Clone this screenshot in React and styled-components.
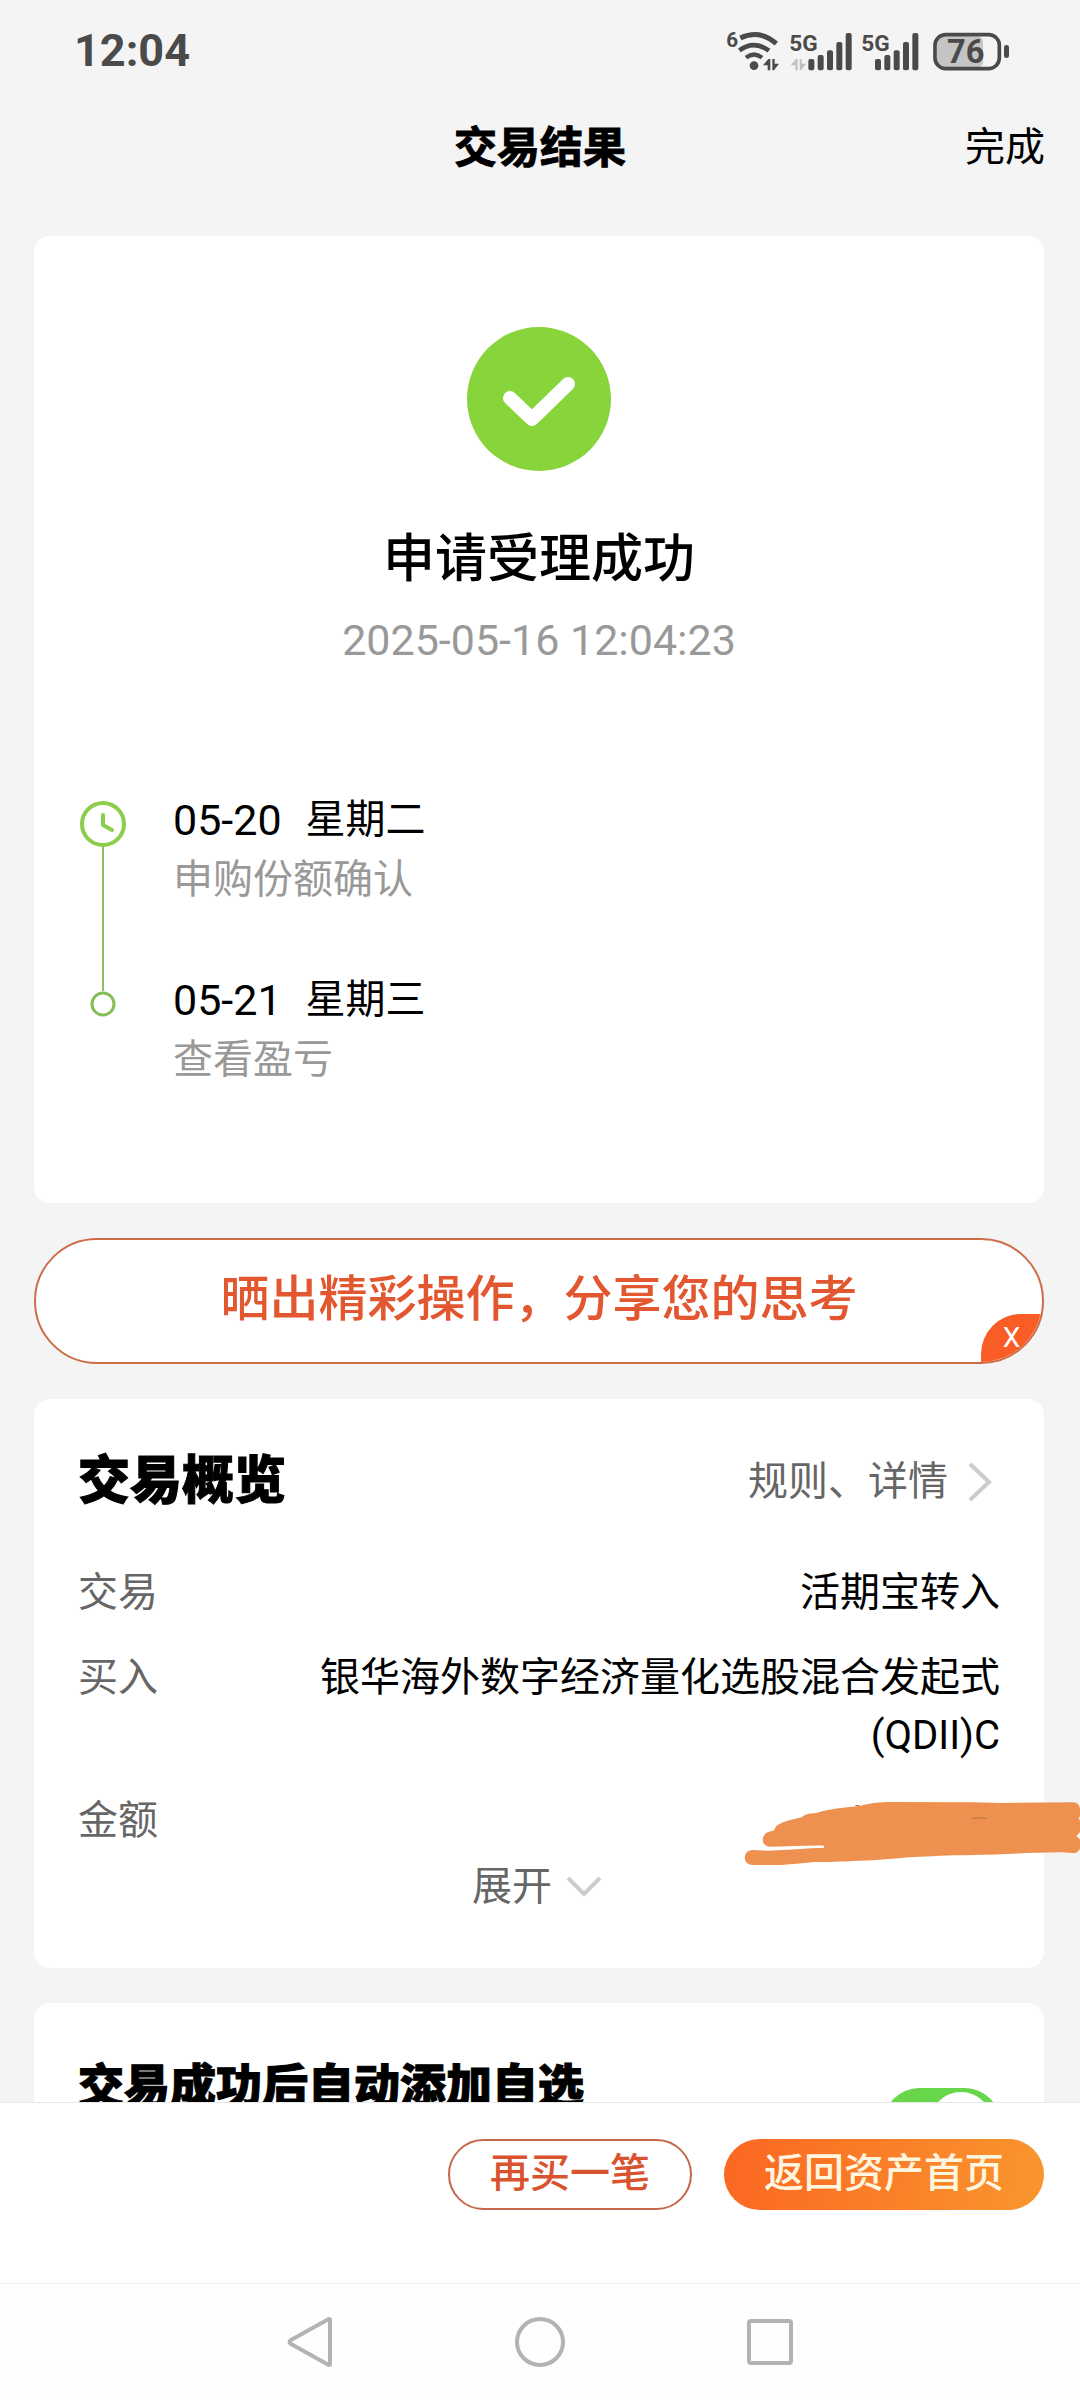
import React, { useState } from "react";
import styled, { createGlobalStyle } from "styled-components";

const GlobalStyle = createGlobalStyle`
  * {
    box-sizing: border-box;
  }
  body {
    margin: 0;
    background: #f4f4f4;
    color: #000;
    font-family: Roboto, "Noto Sans CJK SC", sans-serif;
    font-size: 40px;
    line-height: 58px;
  }
  h1, h2, p, ol, dl, dd {
    margin: 0;
    padding: 0;
  }
  button {
    padding: 0;
    border: none;
    background: none;
    color: inherit;
    font: inherit;
    cursor: pointer;
  }
  svg {
    display: block;
  }
`;

const Page = styled.div`
  display: flex;
  flex-direction: column;
  height: 100vh;
`;

const StatusBar = styled.div`
  display: flex;
  flex-shrink: 0;
  align-items: center;
  justify-content: space-between;
  height: 102px;
  padding: 0 70px 0 74px;
  color: #4a4a4a;
`;

const Clock = styled.span`
  font-size: 45px;
  font-weight: 700;
`;

const StatusIcons = styled.div`
  display: flex;
  align-items: center;
  gap: 9px;
`;

const Header = styled.header`
  display: grid;
  flex-shrink: 0;
  grid-template-columns: 1fr auto 1fr;
  align-items: center;
  height: 90px;
  padding: 2px 35px 0;
`;

const Title = styled.h1`
  grid-column: 2;
  font-size: 43px;
  font-weight: 700;
  -webkit-text-stroke: 1px;
`;

const DoneButton = styled.button`
  justify-self: end;
`;

const Content = styled.main`
  display: flex;
  flex: 1;
  flex-direction: column;
  gap: 35px;
  min-height: 0;
  padding: 44px 36px 0 34px;
  overflow-x: hidden;
  overflow-y: auto;
  scrollbar-width: none;
`;

const Card = styled.section`
  flex-shrink: 0;
  padding: 0 44px;
  border-radius: 16px;
  background: #fff;
`;

const ResultCard = styled(Card)`
  padding-top: 91px;
  padding-bottom: 114px;
`;

const Result = styled.div`
  display: flex;
  flex-direction: column;
  align-items: center;
  margin-bottom: 122px;
`;

const ResultTitle = styled.h2`
  margin-top: 53px;
  font-size: 52px;
  font-weight: 500;
  line-height: 72px;
`;

const ResultTime = styled.p`
  margin-top: 15px;
  color: #999;
  font-size: 43px;
`;

const Timeline = styled.ol`
  list-style: none;
`;

const Step = styled.li`
  display: flex;
  gap: 45px;
`;

const StepMark = styled.div`
  display: flex;
  flex-direction: column;
  align-items: center;
  width: 50px;
  padding-top: ${(props) => (props.$first ? 10 : 0)}px;
`;

const StepLine = styled.span`
  flex: 1;
  width: 2px;
  background: #8cbf60;
`;

// short line that joins the last dot to the step above
const StepStem = styled.span`
  width: 2px;
  height: 20px;
  background: #8cbf60;
`;

const StepBody = styled.div`
  padding-bottom: ${(props) => (props.$last ? 0 : 62)}px;
`;

const StepDate = styled.p`
  display: flex;
  gap: 24px;
`;

const StepDay = styled.span`
  font-size: 43px;
`;

const StepNote = styled.p`
  padding-top: 2px;
  color: #999;
`;

const ShareBar = styled.div`
  position: relative;
  flex-shrink: 0;
  border: 2px solid #cf6c48;
  border-radius: 63px;
  background: #fff;
  overflow: hidden;
`;

const ShareButton = styled.button`
  width: 100%;
  height: 122px;
  padding-bottom: 2px;
  color: #e2572f;
  font-size: 49px;
  font-weight: 500;
`;

const CloseButton = styled.button`
  position: absolute;
  right: 0;
  bottom: 0;
  width: 61px;
  height: 48px;
  border-top-left-radius: 40px;
  background: #f95d25;
  color: #fff;
  font-size: 28px;
  line-height: 48px;
`;

const OverviewCard = styled(Card)`
  padding-top: 47px;
  padding-bottom: 52px;
`;

const OverviewHead = styled.div`
  display: flex;
  align-items: center;
  justify-content: space-between;
  margin-bottom: 46px;
`;

const OverviewTitle = styled.h2`
  font-size: 52px;
  font-weight: 900;
  line-height: 72px;
  -webkit-text-stroke: 1px;
`;

const DetailLink = styled.a`
  display: flex;
  align-items: center;
  gap: 20px;
  padding-right: 8px;
  color: #666;
  text-decoration: none;
`;

const Rows = styled.dl`
  display: flex;
  flex-direction: column;
  gap: 27px;
`;

const Row = styled.div`
  position: relative;
  display: flex;
  justify-content: space-between;
`;

const RowLabel = styled.dt`
  color: #666;
`;

const RowValue = styled.dd`
  max-width: 75%;
  text-align: right;
`;

const Scribble = styled.svg`
  position: absolute;
  top: 4px;
  right: -80px;
`;

const ExpandButton = styled.button`
  display: flex;
  align-items: center;
  gap: 14px;
  margin: 8px auto 0;
  padding-right: 4px;
  color: #666;
`;

const WatchCard = styled(Card)`
  display: flex;
  align-items: flex-start;
  justify-content: space-between;
  padding-top: 54px;
  padding-bottom: 60px;
`;

const WatchLabel = styled.label`
  font-size: 46px;
  font-weight: 900;
  -webkit-text-stroke: 1px;
`;

const Switch = styled.input`
  appearance: none;
  width: 116px;
  height: 70px;
  margin: 31px 0 0;
  border-radius: 35px;
  background: ${(props) => (props.checked ? "#67d648" : "#ddd")};

  &::before {
    content: "";
    display: block;
    width: 62px;
    height: 62px;
    margin: 4px;
    margin-left: ${(props) => (props.checked ? 46 : 4)}px;
    border-radius: 50%;
    background: #fff;
  }
`;

const Footer = styled.footer`
  display: flex;
  flex-shrink: 0;
  justify-content: flex-end;
  gap: 32px;
  padding: 36px 36px 73px;
  border-top: 1px solid #e8e8e8;
  background: #fff;
`;

const PillButton = styled.button`
  height: 71px;
  padding: 0 40px 2px;
  border-radius: 36px;
  font-weight: 500;
`;

const OutlineButton = styled(PillButton)`
  border: 2px solid #c4674a;
  color: #d9532e;
`;

const SolidButton = styled(PillButton)`
  background: linear-gradient(100deg, #fb6722, #f9962e);
  color: #fff6e0;
`;

const NavBar = styled.nav`
  display: flex;
  flex-shrink: 0;
  align-items: center;
  justify-content: center;
  gap: 178px;
  height: 117px;
  border-top: 1px solid #f2f2f2;
  background: #fefefe;
`;

const WifiIcon = () => (
  <svg width="54" height="44" viewBox="78 84 162 132" fill="none" stroke="#4a4a4a">
    <text x="79" y="138" fill="#4a4a4a" stroke="none" fontSize="62" fontWeight="700">
      6
    </text>
    <path d="M121 111Q180 84 229 128" strokeWidth="15" />
    <path d="M118 148Q162 116 207 149" strokeWidth="14" />
    <path d="M138 170Q162 151 186 170" strokeWidth="13" />
    <circle cx="162" cy="194" r="13" fill="#4a4a4a" stroke="none" />
    <path d="M189 193L205 174H211V208H203V193ZM217 174H224V188H237L222 208H217Z" fill="#4a4a4a" stroke="none" />
  </svg>
);

function SignalIcon({ barsX, arrows }) {
  const tops = [90, 78, 64, 39, 12];
  return (
    <svg width="63" height="44" viewBox="0 0 189 132" fill="#4a4a4a">
      <text x="1" y="67" fontSize="68" fontWeight="700">
        5G
      </text>
      {arrows && (
        <path d="M5 109L21 90H26V124H19V109ZM32 90H38V104H51L37 124H32Z" fill="#c2c2c2" />
      )}
      {tops.map((top, i) => (
        <rect key={top} x={barsX + i * 28} y={top} width="18" height={124 - top} rx="6" />
      ))}
    </svg>
  );
}

const BatteryIcon = () => (
  <svg width="77" height="44" viewBox="699 84 231 132">
    <rect x="711" y="106" width="138" height="93" rx="16" fill="#c4c4c4" />
    <rect x="705" y="101" width="193" height="102" rx="32" fill="none" stroke="#4a4a4a" strokeWidth="11" />
    <rect x="912" y="132" width="15" height="39" rx="7" fill="#4a4a4a" />
    <text x="797" y="187" textAnchor="middle" fill="#4a4a4a" fontSize="98" fontWeight="700">
      76
    </text>
  </svg>
);

const CheckIcon = () => (
  <svg width="144" height="144" viewBox="0 0 144 144">
    <circle cx="72" cy="72" r="72" fill="#87d43b" />
    <path
      d="M43 71L65 92L101 57"
      fill="none"
      stroke="#fff"
      strokeWidth="14"
      strokeLinecap="round"
      strokeLinejoin="round"
    />
  </svg>
);

const ClockIcon = () => (
  <svg width="46" height="46" viewBox="0 0 46 46" fill="none" stroke="#8ccd4c" strokeWidth="4">
    <circle cx="23" cy="23" r="21" />
    <path d="M23 14V24L32 29" strokeLinecap="round" strokeLinejoin="round" />
  </svg>
);

const DotIcon = () => (
  <svg width="26" height="26" viewBox="0 0 26 26" fill="none" stroke="#86bd58" strokeWidth="3">
    <circle cx="13" cy="13" r="11" />
  </svg>
);

const ChevronRight = () => (
  <svg width="24" height="40" viewBox="0 0 24 40" fill="none" stroke="#ccc" strokeWidth="4">
    <path d="M2 2L21 20L2 38" />
  </svg>
);

const ChevronDown = () => (
  <svg width="36" height="22" viewBox="0 0 36 22" fill="none" stroke="#ccc" strokeWidth="4">
    <path d="M2 2L18 18L34 2" />
  </svg>
);

const steps = [
  { date: "05-20", day: "星期二", note: "申购份额确认" },
  { date: "05-21", day: "星期三", note: "查看盈亏" },
];

const rows = [
  { label: "交易", value: "活期宝转入" },
  { label: "买入", value: "银华海外数字经济量化选股混合发起式(QDII)C" },
];

function App() {
  const [autoAdd, setAutoAdd] = useState(true);

  return (
    <Page>
      <GlobalStyle />
      <StatusBar>
        <Clock>12:04</Clock>
        <StatusIcons>
          <WifiIcon />
          <SignalIcon barsX={58} arrows />
          <SignalIcon barsX={42} />
          <BatteryIcon />
        </StatusIcons>
      </StatusBar>
      <Header>
        <Title>交易结果</Title>
        <DoneButton>完成</DoneButton>
      </Header>

      <Content>
        <ResultCard>
          <Result>
            <CheckIcon />
            <ResultTitle>申请受理成功</ResultTitle>
            <ResultTime>2025-05-16 12:04:23</ResultTime>
          </Result>
          <Timeline>
            {steps.map((step, i) => (
              <Step key={step.date}>
                <StepMark $first={i === 0}>
                  {i === 0 ? (
                    <>
                      <ClockIcon />
                      <StepLine />
                    </>
                  ) : (
                    <>
                      <StepStem />
                      <DotIcon />
                    </>
                  )}
                </StepMark>
                <StepBody $last={i === steps.length - 1}>
                  <StepDate>
                    <StepDay>{step.date}</StepDay>
                    {step.day}
                  </StepDate>
                  <StepNote>{step.note}</StepNote>
                </StepBody>
              </Step>
            ))}
          </Timeline>
        </ResultCard>

        <ShareBar>
          <ShareButton>晒出精彩操作，分享您的思考</ShareButton>
          <CloseButton>X</CloseButton>
        </ShareBar>

        <OverviewCard>
          <OverviewHead>
            <OverviewTitle>交易概览</OverviewTitle>
            <DetailLink href="#detail">
              规则、详情
              <ChevronRight />
            </DetailLink>
          </OverviewHead>
          <Rows>
            {rows.map((row) => (
              <Row key={row.label}>
                <RowLabel>{row.label}</RowLabel>
                <RowValue>{row.value}</RowValue>
              </Row>
            ))}
            <Row>
              <RowLabel>金额</RowLabel>
              <dd>
                <Scribble width="340" height="72" viewBox="120 168 1020 216">
                  <path
                    d="M210 320C181 320 182 282 207 275L223 271C229 250 251 245 305 232C318 220 330 221 348 219C390 206 440 202 478 198C520 188 540 186 570 186L820 187L900 189L1118 187C1132 187 1138 196 1140 206V229L1136 234L1140 242V276L1129 288L1140 298V326C1134 337 1126 340 1117 339L1080 337C980 338 900 344 820 345C740 346 690 349 640 351C580 356 530 361 480 362C420 365 380 366 345 366C300 369 260 375 230 375L158 375C126 374 127 332 158 330L205 332C260 330 320 324 373 323L371 317C320 316 260 320 210 320Z"
                    fill="#ee9150"
                  />
                  <path d="M817 236Q838 229 859 236M466 196L478 197" fill="none" stroke="#b0733a" strokeWidth="3" />
                </Scribble>
              </dd>
            </Row>
          </Rows>
          <ExpandButton>
            展开
            <ChevronDown />
          </ExpandButton>
        </OverviewCard>

        <WatchCard>
          <WatchLabel htmlFor="auto-add">交易成功后自动添加自选</WatchLabel>
          <Switch
            id="auto-add"
            type="checkbox"
            checked={autoAdd}
            onChange={(e) => setAutoAdd(e.target.checked)}
          />
        </WatchCard>
      </Content>

      <Footer>
        <OutlineButton>再买一笔</OutlineButton>
        <SolidButton>返回资产首页</SolidButton>
      </Footer>
      <NavBar>
        <button aria-label="返回">
          <svg width="52" height="52" viewBox="0 0 52 52" fill="none" stroke="#b3b3b3" strokeWidth="4">
            <path d="M46 4V48Q46 50 43 48L7 28Q4 26 7 24L43 4Q46 2 46 4Z" strokeLinejoin="round" />
          </svg>
        </button>
        <button aria-label="主页">
          <svg width="52" height="52" viewBox="0 0 52 52" fill="none" stroke="#b3b3b3" strokeWidth="4">
            <circle cx="26" cy="26" r="23" />
          </svg>
        </button>
        <button aria-label="最近任务">
          <svg width="52" height="52" viewBox="0 0 52 52" fill="none" stroke="#b3b3b3" strokeWidth="4">
            <rect x="5" y="5" width="42" height="42" rx="2" />
          </svg>
        </button>
      </NavBar>
    </Page>
  );
}

export default App;
